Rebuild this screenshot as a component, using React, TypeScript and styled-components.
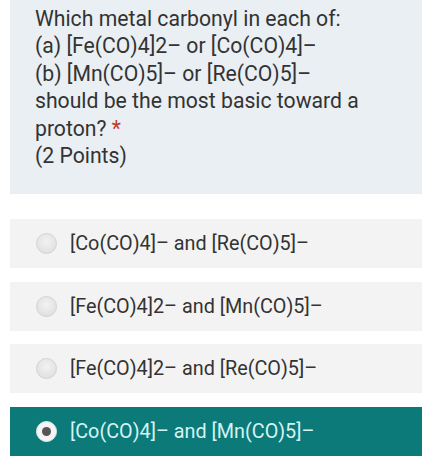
import React from "react";
import styled, { createGlobalStyle } from "styled-components";

const GlobalStyle = createGlobalStyle`
  body {
    margin: 0;
    background: #ffffff;
    font-family: Roboto, "Liberation Sans", Arial, sans-serif;
  }
`;

const Page = styled.div`
  width: 441px;
  padding: 0 19px 0 10px;
  box-sizing: border-box;
`;

const QuestionBox = styled.div`
  background: #e9eff3;
  padding: 5px 10px 25px 25px;
  color: #333333;
  font-size: 21.2px;
  line-height: 27.4px;
`;

const Required = styled.span`
  color: #c0392b;
`;

const Options = styled.div`
  display: flex;
  flex-direction: column;
  gap: 13.5px;
  margin-top: 25px;
`;

const OptionRow = styled.div<{ $selected?: boolean }>`
  height: 49px;
  display: flex;
  align-items: center;
  padding-left: 26px;
  gap: 13px;
  background: ${(p) => (p.$selected ? "#0b7a79" : "#f3f3f3")};
  color: ${(p) => (p.$selected ? "#d4f4f4" : "#333333")};
  font-size: 19.8px;
`;

const Radio = styled.span<{ $selected?: boolean }>`
  width: 21px;
  height: 21px;
  border-radius: 50%;
  box-sizing: border-box;
  flex: none;
  display: flex;
  align-items: center;
  justify-content: center;
  background: ${(p) =>
    p.$selected
      ? "#f4f4f4"
      : "radial-gradient(circle at 50% 40%, #f2f2f2 0%, #e2e2e2 70%, #d4d4d4 100%)"};
  border: 1px solid ${(p) => (p.$selected ? "#e6e6e6" : "#d2d2d2")};
  &::after {
    content: "";
    display: ${(p) => (p.$selected ? "block" : "none")};
    width: 9px;
    height: 9px;
    border-radius: 50%;
    background: #5a5255;
  }
`;

const options = [
  "[Co(CO)4]– and [Re(CO)5]–",
  "[Fe(CO)4]2– and [Mn(CO)5]–",
  "[Fe(CO)4]2– and [Re(CO)5]–",
  "[Co(CO)4]– and [Mn(CO)5]–",
];

export default function App() {
  const selected = 3;
  return (
    <>
      <GlobalStyle />
      <Page>
        <QuestionBox>
          Which metal carbonyl in each of:
          <br />
          (a) [Fe(CO)4]2– or [Co(CO)4]–
          <br />
          (b) [Mn(CO)5]– or [Re(CO)5]–
          <br />
          should be the most basic toward a
          <br />
          proton? <Required>*</Required>
          <br />
          (2 Points)
        </QuestionBox>
        <Options>
          {options.map((o, i) => (
            <OptionRow key={o} $selected={i === selected}>
              <Radio $selected={i === selected} />
              {o}
            </OptionRow>
          ))}
        </Options>
      </Page>
    </>
  );
}
